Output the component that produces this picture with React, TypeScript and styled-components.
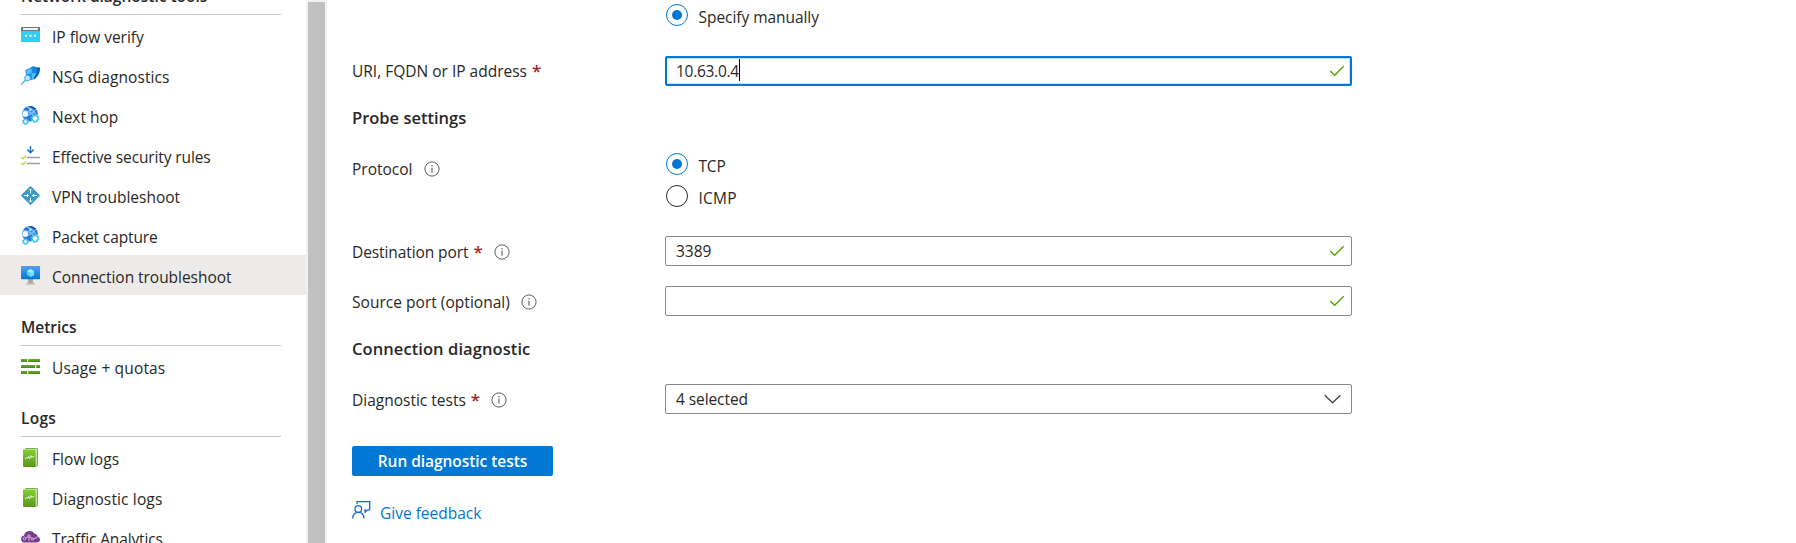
import React from 'react';
import styled, { createGlobalStyle, css } from 'styled-components';

const GlobalStyle = createGlobalStyle`
  *, *::before, *::after { box-sizing: border-box; }
  body {
    margin: 0;
    background: #fff;
    color: #292827;
    font-family: 'Open Sans', 'Noto Sans', sans-serif;
    font-size: 15.5px;
    overflow: hidden;
  }
`;

const Page = styled.div`
  display: flex;
  height: 543px;
  overflow: hidden;
`;

const Sidebar = styled.nav`
  flex: none;
  width: 306px;
  height: 543px;
  overflow: hidden;
`;

const ScrollTrack = styled.div`
  flex: none;
  width: 21px;
  padding: 2px 2px 0;
  background: #f1f1f1;
`;

const ScrollThumb = styled.div`
  height: 100%;
  background: #c1c1c1;
`;

const Label = styled.span<{ $track?: number }>`
  white-space: nowrap;
  letter-spacing: ${(p) => p.$track ?? 0}px;
`;

const GroupTitle = styled.h3<{ $cut?: boolean }>`
  display: flex;
  align-items: center;
  height: 51px;
  margin: ${(p) => (p.$cut ? '-36px' : '0')} 25px 0 21px;
  padding-top: 13px;
  border-bottom: 1px solid #c8c6c4;
  font-size: 15.5px;
  font-weight: 600;
`;

const NavItem = styled.a<{ $active?: boolean }>`
  display: flex;
  align-items: center;
  gap: 12px;
  height: 40px;
  padding-left: 21px;
  background: ${(p) => (p.$active ? '#edebe9' : 'transparent')};

  & > ${Label} { padding-top: 3px; }
  & > svg { flex: none; margin-top: 1px; }
`;

const Main = styled.main`
  flex: 1;
  padding-left: 25px;
`;

const FormRow = styled.div<{ $h: number; $gap?: number }>`
  display: grid;
  grid-template-columns: 313px 687px;
  align-items: start;
  height: ${(p) => p.$h}px;
  margin-bottom: ${(p) => p.$gap ?? 0}px;
`;

const FieldLabel = styled.label<{ $top?: number }>`
  display: flex;
  align-items: center;
  height: 30px;
  margin-top: ${(p) => p.$top ?? 1}px;

  & > svg { margin-left: 11px; }
`;

const Required = styled.span`
  margin: -2px 0 0 5px;
  color: #a4262c;
  font-size: 17px;
  font-weight: 600;
`;

const SectionTitle = styled.h2<{ $h: number }>`
  height: ${(p) => p.$h}px;
  margin: 0;
  font-size: 16.5px;
  font-weight: 600;
  line-height: 24px;
`;

const focused = css`
  border: 2px solid #0078d4;
  box-shadow: inset -1px -1px 0 #c7e0f4, inset 0 1px 0 #c7e0f4;
  padding: 0 5px 0 9px;

  & > ${Label} { margin-top: -1px; }
`;

const Field = styled.div<{ $focused?: boolean }>`
  display: flex;
  align-items: center;
  height: 30px;
  padding: 0 6px 0 10px;
  border: 1px solid #8a8886;
  border-radius: 2px;
  ${(p) => p.$focused && focused}

  & > svg { margin-left: auto; }
`;

const Caret = styled.span`
  width: 1px;
  height: 22px;
  margin-top: -3px;
  background: #000;
`;

const RadioList = styled.div<{ $top?: number }>`
  display: flex;
  flex-direction: column;
  gap: 10px;
  padding: ${(p) => p.$top ?? 0}px 0 0 1px;
`;

const RadioOption = styled.div`
  display: flex;
  align-items: center;
  gap: 10.5px;
  height: 22px;

  & > ${Label} { padding-top: 3px; }
`;

const RadioMark = styled.span<{ $on?: boolean }>`
  display: grid;
  place-items: center;
  width: 22px;
  height: 22px;
  border: 1px solid ${(p) => (p.$on ? '#0078d4' : '#292827')};
  border-radius: 50%;

  &::after {
    content: '';
    width: 10px;
    height: 10px;
    border-radius: 50%;
    background: ${(p) => (p.$on ? '#0078d4' : 'transparent')};
  }
`;

const RunButton = styled.button`
  display: flex;
  align-items: center;
  justify-content: center;
  width: 201px;
  height: 30px;
  padding: 0;
  border: 0;
  border-radius: 2px;
  background: #0078d4;
  color: #fff;
  font: inherit;
  font-weight: 600;
`;

const FeedbackLink = styled.a`
  display: flex;
  align-items: flex-start;
  gap: 9px;
  margin-top: 24px;
  color: #0078d4;

  & > ${Label} { line-height: 24px; padding-top: 1px; }
`;

const Check = () => (
  <svg width="16" height="14" viewBox="0 0 16 14" fill="none" stroke="#57a300" strokeWidth="1.4">
    <path d="M1.2 7 5.7 11.2 14.7 2.2" />
  </svg>
);

const ChevronSvg = styled.svg`
  margin-right: 3px;
`;

const Chevron = () => (
  <ChevronSvg width="18" height="12" viewBox="0 0 18 12" fill="none" stroke="#484644" strokeWidth="1.4">
    <path d="M.8 2.2 8.6 9.8 16.4 2.2" />
  </ChevronSvg>
);

const Info = () => (
  <svg width="16" height="16" viewBox="0 0 16 16" fill="none" stroke="#605e5c">
    <circle cx="8" cy="8" r="7.1" />
    <path d="M8 6.6v5M8 4.1v1.3" stroke="#484644" />
  </svg>
);

const FlowIcon = () => (
  <svg width="19" height="19" viewBox="0 0 19 19">
    <path d="M0 4h19v11.3q0 .7-.7.7H.7q-.7 0-.7-.7z" fill="#32cdf0" />
    <path d="M.6 1h17.8q.6 0 .6.6V5H0V1.6q0-.6.6-.6z" fill="#767676" />
    <rect x="2" y="2" width="15" height="2" rx=".5" fill="#f2f2f2" />
    <g fill="#e6fbff"><circle cx="5" cy="9.8" r="1.2" /><circle cx="9.5" cy="9.8" r="1.2" /><circle cx="14" cy="9.8" r="1.2" /></g>
  </svg>
);

const ShieldIcon = () => (
  <svg width="19" height="19" viewBox="0 0 19 19">
    <path d="M12.500.2c2 .9 4 1.200 6.500 1.200.2 5-1.500 9-6.500 12.300z" fill="#0a5fc0" />
    <path d="M4.500 3.700C7.500 3.600 9.500.9 12 .3c1.400.9 2.800 1.100 3.800 1.300.4 5.400-1.600 9.800-5 12.700C6 12.500 4 8.500 4.500 3.700z" fill="#1688e4" />
    <path d="M5.300 4.300C7.400 4 9 2.800 10.600 1.900V7.500L5.300 8.300zM10.600 7.500l4.500-.6c-.6 2.600-2 4.800-4.500 6.600z" fill="#4fc3f7" />
    <circle cx="6.500" cy="12" r="2.900" fill="#b7e6fa" stroke="#2fa4e2" strokeWidth=".9" />
    <path d="M4.400 14.300.6 18" stroke="#42b6e8" strokeWidth="1.300" strokeLinecap="round" />
  </svg>
);

const GlobeIcon = () => (
  <svg width="19" height="19" viewBox="0 0 19 19">
    <circle cx="9" cy="7.800" r="7.800" fill="#2878d8" />
    <path d="M2 5q6-1 12 6M6 1q6 2 9.500 9M4 10q7-1 11-7" stroke="#8ccdf7" strokeWidth="1.200" fill="none" />
    <path d="M9 0q3 2 6 3" stroke="#1253ad" strokeWidth="1.300" fill="none" />
    <circle cx="4.300" cy="8" r="2.900" fill="#eaf6fe" />
    <circle cx="9.300" cy="4" r="1.400" fill="#a6daf9" />
    <g fill="#f4fcff" stroke="#43c5ee" strokeWidth="1.200">
      <circle cx="14" cy="12.500" r="2.900" />
      <circle cx="4.500" cy="15.500" r="2.200" />
    </g>
    <g fill="none" stroke="#43c5ee" strokeWidth="1.200">
      <circle cx="14" cy="12.500" r="3.900" strokeDasharray="1.530 1.530" />
      <circle cx="4.500" cy="15.500" r="3" strokeDasharray="1.180 1.180" />
    </g>
  </svg>
);

const RulesIcon = () => (
  <svg width="19" height="19" viewBox="0 0 19 19" fill="none">
    <path d="M9.500 0v6.500M6.300 3.600 9.500 6.800l3.200-3.200" stroke="#0f74c8" strokeWidth="1.400" />
    <path d="M6 11.500h13M6 17.500h13" stroke="#a0a0a0" strokeWidth="1.600" />
    <path d="m.3 11 1.700 1.700L5.300 9.500M.3 17 2 18.600l3.300-3.200" stroke="#bcd94c" strokeWidth="1.400" />
  </svg>
);

const VpnIcon = () => (
  <svg width="19" height="19" viewBox="0 0 19 19">
    <rect x="2.700" y="2.700" width="13.600" height="13.600" rx="1" transform="rotate(45 9.500 9.500)" fill="#3999c6" />
    <g stroke="#fff" strokeWidth="1" fill="none">
      <path d="M9.500 3v4.300M9.500 11.700V16M3 9.500h4.300M11.700 9.500H16" />
      <path d="m7.900 4.600 1.600-1.700 1.600 1.700M7.900 14.400l1.600 1.700 1.600-1.700M5.900 7.900l1.700 1.600-1.700 1.600M13.100 7.900l-1.700 1.600 1.700 1.600" />
    </g>
  </svg>
);

const MonitorIcon = () => (
  <svg width="19" height="19" viewBox="0 0 19 19">
    <defs>
      <linearGradient id="screen" x1="0" y1="1" x2="0" y2="0">
        <stop offset="0" stopColor="#0078d4" /><stop offset="1" stopColor="#5a9cf0" />
      </linearGradient>
    </defs>
    <path d="M7 13h5v3.500l2 1.300v.7H5v-.7l2-1.300z" fill="#a8a8a8" />
    <path d="M4.800 17.500h9.400v1H4.800z" fill="#d2d2d2" />
    <rect width="19" height="13.200" rx=".6" fill="url(#screen)" />
    <path d="m9.500 3 3.500 2v4l-3.500 2L6 9V5z" fill="#50d0f5" />
    <path d="m9.500 3 3.500 2-3.500 2L6 5z" fill="#9cebff" />
    <path d="m9.500 7 3.500-2v4l-3.500 2z" fill="#7fe0fb" />
  </svg>
);

const QuotaIcon = () => (
  <svg width="19" height="19" viewBox="0 0 19 19">
    <path d="M0 2h19v3H0zM0 8h19v3H0zM0 14h19v3H0z" fill="#66a92d" />
    <path d="M0 3.600h19V5H0zM0 9.600h19V11H0zM0 15.600h19V17H0z" fill="#4d8a1c" />
    <path d="M6 1.500h1.300v4H6zM14 7.500h1.300v4H14zM6 13.500h1.300v4H6z" fill="#d9efc4" />
  </svg>
);

const LogIcon = () => (
  <svg width="19" height="19" viewBox="0 0 19 19">
    <defs>
      <linearGradient id="book" x1="0" y1="0" x2="0" y2="1">
        <stop offset="0" stopColor="#83d030" /><stop offset="1" stopColor="#5c9421" />
      </linearGradient>
    </defs>
    <path d="M4 0h11.500q1.300 0 1.300 1.300V17q0 1.300-1.300 1.300L14 19z" fill="#5c9a25" />
    <path d="M3.500.8h12.300v16.500L14 18.300z" fill="#e3f2d2" />
    <path d="M2 1.500h11.500q1.200 0 1.200 1.200V19H3.300Q2 19 2 17.700z" fill="url(#book)" />
    <path d="m4 10.500 2.500-.8 1-1.200.8 2.500 1.500-3.500.8 2 2.500-1.200" stroke="#e9f8d9" strokeWidth="1" fill="none" />
  </svg>
);

const CloudIcon = () => (
  <svg width="19" height="19" viewBox="0 0 19 19">
    <path d="M3.500 14.500C1.300 14.500 0 13 0 10.800 0 8.800 1.500 7.500 3 7.400 3.700 4.500 6 3 8.700 3c2.500 0 4 1.200 4.800 2.800 2 0 3.300 1.500 3 3.300 1.500.2 2.500 1.200 2.500 2.700 0 1.600-1.200 2.700-3 2.700z" fill="#7a3b90" />
    <g stroke="#d9b9e3" strokeWidth="1" fill="none">
      <circle cx="3.500" cy="10.500" r="1.300" /><circle cx="8" cy="8" r="1.200" /><circle cx="11.500" cy="11" r="1" />
      <path d="M4.800 10 7 8.700M9 9l2 1.500M12.500 10.800 16 9.500M8 9v4" />
    </g>
  </svg>
);

const FeedbackIcon = () => (
  <svg width="19" height="19" viewBox="0 0 19 19" fill="none" stroke="#1565d8" strokeWidth="1.3">
    <path d="M5 4V1.700h12.700v8.100h-2.200l-2.300 2.300V9.800h-1" />
    <circle cx="6.300" cy="9" r="3.300" />
    <path d="M.7 18.500c0-3.700 2.200-6.200 5.600-6.200s5.600 2.500 5.600 6.200" />
  </svg>
);

type Entry = { text: string; track?: number; icon: React.FC; active?: boolean };

const tools: Entry[] = [
  { text: 'IP flow verify', icon: FlowIcon },
  { text: 'NSG diagnostics', track: 0.07, icon: ShieldIcon },
  { text: 'Next hop', icon: GlobeIcon },
  { text: 'Effective security rules', track: -0.125, icon: RulesIcon },
  { text: 'VPN troubleshoot', icon: VpnIcon },
  { text: 'Packet capture', track: -0.13, icon: GlobeIcon },
  { text: 'Connection troubleshoot', track: -0.04, icon: MonitorIcon, active: true },
];
const metrics: Entry[] = [{ text: 'Usage + quotas', track: 0.16, icon: QuotaIcon }];
const logs: Entry[] = [
  { text: 'Flow logs', track: 0.1, icon: LogIcon },
  { text: 'Diagnostic logs', track: 0.14, icon: LogIcon },
  { text: 'Traffic Analytics', track: -0.14, icon: CloudIcon },
];

const NavGroup = ({ title, cut, track, items }: { title: string; cut?: boolean; track?: number; items: Entry[] }) => (
  <>
    <GroupTitle $cut={cut}><Label $track={track}>{title}</Label></GroupTitle>
    {items.map(({ text, track: t, icon: Icon, active }) => (
      <NavItem key={text} $active={active}>
        <Icon />
        <Label $track={t}>{text}</Label>
      </NavItem>
    ))}
  </>
);

const Radio = ({ text, track, on }: { text: string; track?: number; on?: boolean }) => (
  <RadioOption>
    <RadioMark $on={on} />
    <Label $track={track}>{text}</Label>
  </RadioOption>
);

export default function App() {
  return (
    <Page>
      <GlobalStyle />
      <Sidebar>
        <NavGroup title="Network diagnostic tools" cut items={tools} />
        <NavGroup title="Metrics" items={metrics} />
        <NavGroup title="Logs" track={0.3} items={logs} />
      </Sidebar>
      <ScrollTrack><ScrollThumb /></ScrollTrack>
      <Main>
        <FormRow $h={56}>
          <span />
          <RadioList $top={4}><Radio text="Specify manually" track={-0.05} on /></RadioList>
        </FormRow>
        <FormRow $h={30} $gap={20}>
          <FieldLabel $top={0}><Label>URI, FQDN or IP address</Label><Required>*</Required></FieldLabel>
          <Field $focused><Label $track={-0.28}>10.63.0.4</Label><Caret /><Check /></Field>
        </FormRow>
        <SectionTitle $h={47}><Label>Probe settings</Label></SectionTitle>
        <FormRow $h={83}>
          <FieldLabel><Label>Protocol</Label><Info /></FieldLabel>
          <RadioList>
            <Radio text="TCP" track={-0.2} on />
            <Radio text="ICMP" track={0.25} />
          </RadioList>
        </FormRow>
        <FormRow $h={30} $gap={20}>
          <FieldLabel><Label $track={-0.09}>Destination port</Label><Required>*</Required><Info /></FieldLabel>
          <Field><Label>3389</Label><Check /></Field>
        </FormRow>
        <FormRow $h={30} $gap={21}>
          <FieldLabel><Label $track={0.03}>Source port (optional)</Label><Info /></FieldLabel>
          <Field><Check /></Field>
        </FormRow>
        <SectionTitle $h={47}><Label $track={0.08}>Connection diagnostic</Label></SectionTitle>
        <FormRow $h={30} $gap={32}>
          <FieldLabel><Label>Diagnostic tests</Label><Required>*</Required><Info /></FieldLabel>
          <Field><Label $track={-0.08}>4 selected</Label><Chevron /></Field>
        </FormRow>
        <RunButton><Label $track={-0.05}>Run diagnostic tests</Label></RunButton>
        <FeedbackLink><FeedbackIcon /><Label>Give feedback</Label></FeedbackLink>
      </Main>
    </Page>
  );
}
